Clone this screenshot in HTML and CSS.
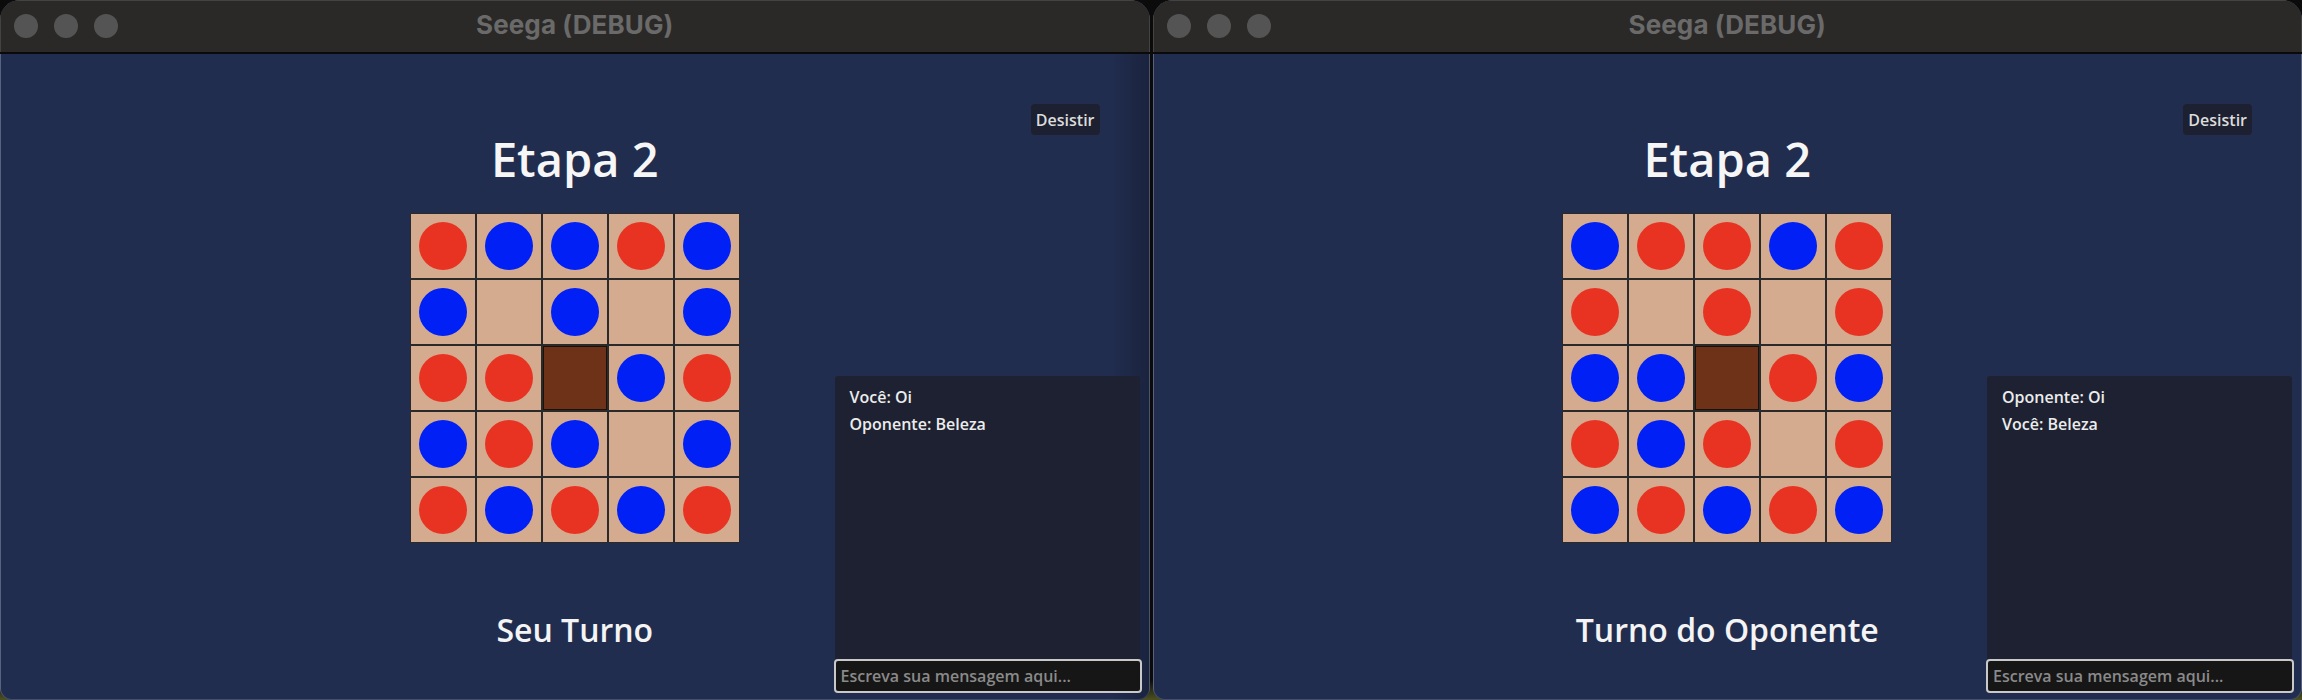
FILE: index.html
```html
<!DOCTYPE html>
<html lang="pt">
<head>
<meta charset="utf-8">
<title>Seega (DEBUG)</title>
<link rel="stylesheet" href="styles.css">
</head>
<body>
<div class="desktop">
  <div class="window win-back">
    <div class="titlebar">
      <div class="lights"><span class="light"></span><span class="light"></span><span class="light"></span></div>
      <div class="title">Seega (DEBUG)</div>
      <div></div>
    </div>
    <div class="content">
      <div class="side"></div>
      <div class="game">
        <h1 class="stage">Etapa 2</h1>
        <div class="board">
          <div class="cell"><span class="piece red"></span></div>
          <div class="cell"><span class="piece blue"></span></div>
          <div class="cell"><span class="piece blue"></span></div>
          <div class="cell"><span class="piece red"></span></div>
          <div class="cell"><span class="piece blue"></span></div>

          <div class="cell"><span class="piece blue"></span></div>
          <div class="cell"></div>
          <div class="cell"><span class="piece blue"></span></div>
          <div class="cell"></div>
          <div class="cell"><span class="piece blue"></span></div>

          <div class="cell"><span class="piece red"></span></div>
          <div class="cell"><span class="piece red"></span></div>
          <div class="cell center"></div>
          <div class="cell"><span class="piece blue"></span></div>
          <div class="cell"><span class="piece red"></span></div>

          <div class="cell"><span class="piece blue"></span></div>
          <div class="cell"><span class="piece red"></span></div>
          <div class="cell"><span class="piece blue"></span></div>
          <div class="cell"></div>
          <div class="cell"><span class="piece blue"></span></div>

          <div class="cell"><span class="piece red"></span></div>
          <div class="cell"><span class="piece blue"></span></div>
          <div class="cell"><span class="piece red"></span></div>
          <div class="cell"><span class="piece blue"></span></div>
          <div class="cell"><span class="piece red"></span></div>
        </div>
        <div class="turn">Seu Turno</div>
      </div>
      <div class="side right">
        <button class="quit">Desistir</button>
        <div class="chat">
          <div class="log">
            <div class="msg">Você: Oi</div>
            <div class="msg">Oponente: Beleza</div>
          </div>
          <input class="entry" type="text" placeholder="Escreva sua mensagem aqui...">
        </div>
      </div>
    </div>
  </div>

  <div class="window">
    <div class="titlebar">
      <div class="lights"><span class="light"></span><span class="light"></span><span class="light"></span></div>
      <div class="title">Seega (DEBUG)</div>
      <div></div>
    </div>
    <div class="content">
      <div class="side"></div>
      <div class="game">
        <h1 class="stage">Etapa 2</h1>
        <div class="board">
          <div class="cell"><span class="piece blue"></span></div>
          <div class="cell"><span class="piece red"></span></div>
          <div class="cell"><span class="piece red"></span></div>
          <div class="cell"><span class="piece blue"></span></div>
          <div class="cell"><span class="piece red"></span></div>

          <div class="cell"><span class="piece red"></span></div>
          <div class="cell"></div>
          <div class="cell"><span class="piece red"></span></div>
          <div class="cell"></div>
          <div class="cell"><span class="piece red"></span></div>

          <div class="cell"><span class="piece blue"></span></div>
          <div class="cell"><span class="piece blue"></span></div>
          <div class="cell center"></div>
          <div class="cell"><span class="piece red"></span></div>
          <div class="cell"><span class="piece blue"></span></div>

          <div class="cell"><span class="piece red"></span></div>
          <div class="cell"><span class="piece blue"></span></div>
          <div class="cell"><span class="piece red"></span></div>
          <div class="cell"></div>
          <div class="cell"><span class="piece red"></span></div>

          <div class="cell"><span class="piece blue"></span></div>
          <div class="cell"><span class="piece red"></span></div>
          <div class="cell"><span class="piece blue"></span></div>
          <div class="cell"><span class="piece red"></span></div>
          <div class="cell"><span class="piece blue"></span></div>
        </div>
        <div class="turn">Turno do Oponente</div>
      </div>
      <div class="side right">
        <button class="quit">Desistir</button>
        <div class="chat">
          <div class="log">
            <div class="msg">Oponente: Oi</div>
            <div class="msg">Você: Beleza</div>
          </div>
          <input class="entry" type="text" placeholder="Escreva sua mensagem aqui...">
        </div>
      </div>
    </div>
  </div>
</div>
</body>
</html>
```

FILE: styles.css
```css
* { box-sizing: border-box; }

html, body {
  margin: 0;
  padding: 0;
  width: 2302px;
  height: 700px;
  overflow: hidden;
  background: #0b0b0b;
}

.desktop {
  display: flex;
  gap: 3px;
  width: 2302px;
  height: 700px;
  background: linear-gradient(to bottom, #0b0b0b 0, #0b0b0b 680px, #4e5220 700px);
}

.window {
  flex: 1 1 0;
  display: flex;
  flex-direction: column;
  height: 700px;
  border-radius: 20px 20px 12px 12px;
  overflow: hidden;
  background: #212d4f;
  box-shadow: inset 0 0 0 1px rgba(255, 255, 255, 0.16);
  font-family: "Open Sans", "Noto Sans", sans-serif;
}

.win-back .content {
  background: linear-gradient(to right, rgba(0,0,0,0) calc(100% - 40px), rgba(0,0,0,0.22) 100%);
}

.titlebar {
  flex: 0 0 54px;
  display: grid;
  grid-template-columns: 1fr auto 1fr;
  align-items: center;
  background: #2a2927;
  border-bottom: 2px solid #0a0a0a;
  box-shadow: inset 0 1px 0 rgba(255,255,255,0.12), inset 1px 0 0 rgba(255,255,255,0.12), inset -1px 0 0 rgba(255,255,255,0.12);
}

.lights {
  display: flex;
  gap: 16px;
  padding-left: 14px;
}

.light {
  width: 24px;
  height: 24px;
  border-radius: 50%;
  background: #545454;
}

.title {
  font-family: "Inter", "Liberation Sans", sans-serif;
  font-weight: 700;
  font-size: 26px;
  color: #6a6a6a;
  padding-bottom: 3px;
  letter-spacing: 0.1px;
}

.content {
  flex: 1 1 auto;
  display: grid;
  grid-template-columns: 1fr 330px 1fr;
  box-shadow: inset 1px 0 0 rgba(255,255,255,0.12), inset -1px 0 0 rgba(255,255,255,0.12);
}

.game {
  display: flex;
  flex-direction: column;
  align-items: center;
  padding-top: 83px;
}

.stage {
  margin: 0 0 31px 0;
  font-size: 47px;
  line-height: 45px;
  font-weight: 600;
  color: #f6f6f6;
  white-space: nowrap;
}

.board {
  display: grid;
  grid-template-columns: repeat(5, 64px);
  grid-template-rows: repeat(5, 64px);
  gap: 2px;
  padding: 1px;
  background: #2a2a2a;
}

.cell {
  display: flex;
  align-items: center;
  justify-content: center;
  background: #d4ab8f;
}

.cell.center {
  background: #6e3218;
  box-shadow: inset 0 0 0 1px #1c120c;
}

.piece {
  width: 48px;
  height: 48px;
  border-radius: 50%;
}

.piece.red { background: #e83323; }
.piece.blue { background: #0020f5; }

.turn {
  margin-top: 71px;
  font-size: 32px;
  line-height: 32px;
  font-weight: 600;
  color: #f4f4f4;
  white-space: nowrap;
}

.side.right {
  display: flex;
  flex-direction: column;
  align-items: flex-end;
}

.quit {
  margin: 50px 50px 0 0;
  height: 31px;
  padding: 0 5px;
  border: 0;
  border-radius: 4px;
  background: #1c2030;
  color: #dcdcdc;
  font-family: "Open Sans", "Noto Sans", sans-serif;
  font-weight: 600;
  font-size: 16px;
}

.chat {
  margin: auto 8px 7px 0;
  width: 308px;
  height: 317px;
  display: flex;
  flex-direction: column;
}

.log {
  flex: 1 1 auto;
  margin: 0 2px 0 1px;
  padding: 8px 15px;
  background: #1d2131;
  border-radius: 3px 3px 0 0;
}

.msg {
  font-size: 16px;
  line-height: 27px;
  font-weight: 600;
  color: #ececec;
}

.entry {
  flex: 0 0 34px;
  height: 34px;
  width: 308px;
  margin: 0;
  padding: 0 5px;
  border: 2px solid #c9c9c9;
  border-radius: 4px;
  background: #161616;
  color: #e0e0e0;
  font-family: "Open Sans", "Noto Sans", sans-serif;
  font-weight: 600;
  font-size: 16px;
  outline: none;
}

.entry::placeholder {
  color: #8a8a8a;
  opacity: 1;
}
```
